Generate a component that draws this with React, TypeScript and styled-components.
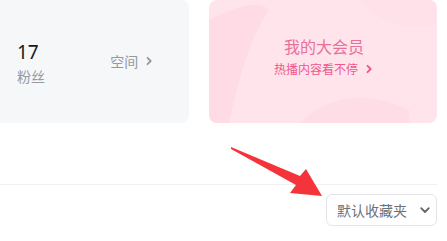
import React from "react";
import styled, { createGlobalStyle } from "styled-components";

const Global = createGlobalStyle`
  html, body { margin: 0; padding: 0; background: #fff; }
  body { font-family: "Noto Sans", "Noto Sans CJK SC", sans-serif; overflow: hidden; }
`;

const Page = styled.div`
  position: relative;
  width: 447px;
  height: 241px;
  overflow: hidden;
`;

const CardRow = styled.div`
  display: flex;
  gap: 20px;
  margin-left: -20px;
  width: 457px;
  height: 123px;
`;

const StatCard = styled.div`
  width: 210px;
  background: #f6f7f8;
  border-radius: 8px;
  display: flex;
  align-items: center;
  justify-content: space-between;
  box-sizing: border-box;
  padding: 0 35px 0 37px;
`;

const Stat = styled.div`
  display: flex;
  flex-direction: column;
  margin-top: 2px;
`;

const StatNum = styled.div`
  font-size: 19px;
  line-height: 24px;
  color: #18191c;
`;

const StatLabel = styled.div`
  font-family: "Noto Sans CJK SC", sans-serif;
  font-size: 14px;
  line-height: 18px;
  margin-top: 3px;
  color: #9499a0;
`;

const SpaceLink = styled.div`
  display: flex;
  align-items: center;
  gap: 6px;
  font-family: "Noto Sans CJK SC", sans-serif;
  font-size: 14px;
  color: #9499a0;
  margin-top: -2px;
`;

const VipCard = styled.div`
  position: relative;
  width: 227px;
  background: #ffe4ec;
  border-radius: 8px;
  overflow: hidden;
  display: flex;
  flex-direction: column;
  align-items: center;
  justify-content: center;
  gap: 3px;
  padding-left: 2px;
`;

const Decor = styled.svg`
  position: absolute;
  left: 0;
  top: 0;
`;

const VipTitle = styled.div`
  position: relative;
  font-family: "Noto Sans CJK SC", sans-serif;
  font-size: 16px;
  line-height: 22px;
  color: #e9709b;
  margin-top: -10px;
`;

const VipSub = styled.div`
  position: relative;
  display: flex;
  align-items: center;
  gap: 6px;
  font-family: "Noto Sans CJK SC", sans-serif;
  font-size: 12px;
  line-height: 18px;
  color: #f0578d;
`;

const Divider = styled.div`
  margin-top: 61px;
  width: 437px;
  height: 1px;
  background: #eeeff1;
`;

const Toolbar = styled.div`
  display: flex;
  justify-content: flex-end;
  width: 437px;
  margin-top: 9px;
`;

const SelectBtn = styled.div`
  display: flex;
  align-items: center;
  gap: 12px;
  box-sizing: border-box;
  height: 32px;
  width: 111px;
  padding: 0 0 0 10px;
  border: 1px solid #e3e5e7;
  border-radius: 6px;
  font-family: "Noto Sans CJK SC", sans-serif;
  font-size: 14px;
  color: #6d7278;
  background: #fff;
`;

const Arrow = styled.svg`
  position: absolute;
  left: 0;
  top: 0;
  pointer-events: none;
`;

const Chevron = ({ color, size = 10 }: { color: string; size?: number }) => (
  <svg width={size} height={size} viewBox="0 0 10 10">
    <path d="M3.5 1.8 L6.7 5 L3.5 8.2" fill="none" stroke={color} strokeWidth="1.8" strokeLinecap="round" strokeLinejoin="round" />
  </svg>
);

export default function App() {
  return (
    <Page>
      <Global />
      <CardRow>
        <StatCard>
          <Stat>
            <StatNum>17</StatNum>
            <StatLabel>粉丝</StatLabel>
          </Stat>
          <SpaceLink>
            空间 <Chevron color="#9499a0" />
          </SpaceLink>
        </StatCard>
        <VipCard>
          <Decor width="227" height="123" viewBox="0 0 227 123">
            <path d="M0 20 C30 5 50 0 60 10 C40 40 30 80 20 123 L0 123 Z" fill="#ffd6e2" opacity="0.6" />
            <path d="M90 123 C120 95 160 90 200 110 L200 123 Z" fill="#ffd9e4" opacity="0.6" />
            <path d="M150 0 C170 20 190 30 227 25 L227 0 Z" fill="#ffdde7" opacity="0.5" />
          </Decor>
          <VipTitle>我的大会员</VipTitle>
          <VipSub>
            热播内容看不停 <Chevron color="#f0578d" />
          </VipSub>
        </VipCard>
      </CardRow>
      <Divider />
      <Toolbar>
        <SelectBtn>
          默认收藏夹
          <svg width="12" height="12" viewBox="0 0 12 12">
            <path d="M2.2 4.2 L6 8 L9.8 4.2" fill="none" stroke="#61666d" strokeWidth="1.8" strokeLinecap="round" strokeLinejoin="round" />
          </svg>
        </SelectBtn>
      </Toolbar>
      <Arrow width="447" height="241" viewBox="0 0 447 241">
        <polygon points="231,147 300,176 306,169 322,196 290,193 296,185 231,149" fill="#f5333a" />
      </Arrow>
    </Page>
  );
}
